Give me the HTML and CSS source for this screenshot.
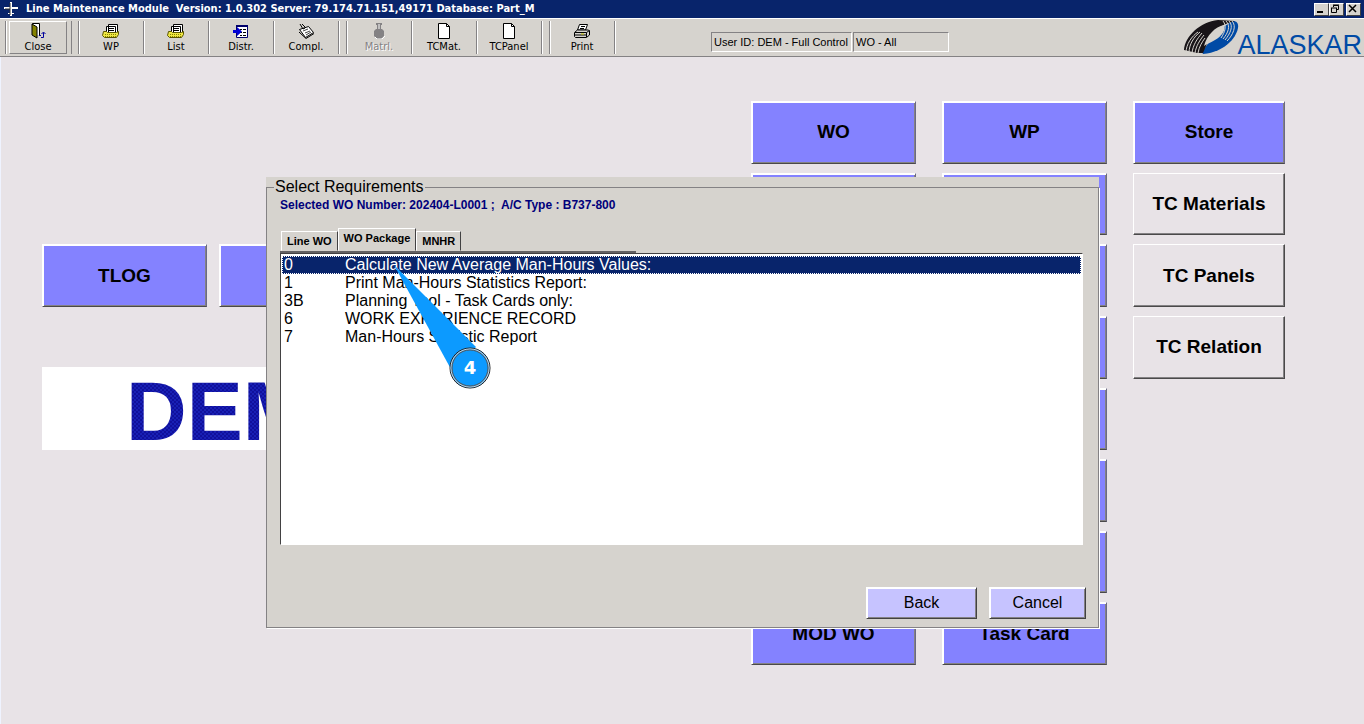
FILE: index.html
```html
<!DOCTYPE html>
<html lang="en">
<head>
  <meta charset="UTF-8">
  <meta name="viewport" content="width=device-width, initial-scale=1">
  <title>Line Maintenance Module</title>
  <link rel="stylesheet" href="styles.css">
</head>
<body>
  <header class="titlebar">
    <svg class="app-icon" width="16" height="16" viewBox="0 0 16 16"><path d="M7 1h2v5h6v2H9v4h2v1H9v2H7v-2H5v-1h2V8H1V6h6z" fill="#fff"/><path d="M7 2v12M2 8h5" stroke="#333" fill="none"/></svg>
    <h1 class="title">Line Maintenance Module&nbsp; Version: 1.0.302 Server: 79.174.71.151,49171 Database: Part_M</h1>
    <div class="win-buttons">
      <button class="win-btn" aria-label="Minimize"><svg width="11" height="10" viewBox="0 0 11 10"><path d="M2 7h6v2H2z"/></svg></button>
      <button class="win-btn" aria-label="Restore"><svg width="11" height="10" viewBox="0 0 11 10"><path d="M3.5 3V1.5h5v4H7M3 1h6M1 4h6M1.5 4v4.5h5V4" fill="none" stroke="#000"/></svg></button>
      <button class="win-btn win-close" aria-label="Close window"><svg width="11" height="10" viewBox="0 0 11 10"><path d="M2 1l7 7M9 1L2 8" stroke="#000" stroke-width="1.5"/></svg></button>
    </div>
  </header>

  <nav class="toolbar">
    <div class="tool-group">
      <button class="tool tool-raised">
        <svg width="18" height="16" viewBox="0 0 18 16"><path d="M3.5 12V.5h7V12" fill="#fff" stroke="#000"/><path d="M3 1l5 3v11l-5-3z" fill="#848200" stroke="#000"/><path d="M10 12.500h2M12 14.500h2.500v-5M12.500 11l2-2 2 2" fill="none" stroke="#00009c"/></svg>
        Close
      </button>
    </div>
    <div class="tool-group">
      <button class="tool">
        <svg width="18" height="16" viewBox="0 0 18 16"><path d="M6.500 9V1.500h9V10M4.500 9V3.500h9V10" fill="#fff" stroke="#000"/><path d="M7 5.500h5M7 7.500h5" stroke="#000"/><path d="M1.500 8.500h3l1 1h9l2-1v3l-2 3h-12l-2-2z" fill="#efe742" stroke="#5a5500"/><path d="M3 11.500h11M3 13.500h11" stroke="#848200" stroke-dasharray="1 1"/></svg>
        WP
      </button>
      <button class="tool">
        <svg width="18" height="16" viewBox="0 0 18 16"><path d="M6.500 9V1.500h9V10M4.500 9V3.500h9V10" fill="#fff" stroke="#000"/><path d="M7 5.500h5M7 7.500h5" stroke="#000"/><path d="M1.500 8.500h3l1 1h9l2-1v3l-2 3h-12l-2-2z" fill="#efe742" stroke="#5a5500"/><path d="M3 11.500h11M3 13.500h11" stroke="#848200" stroke-dasharray="1 1"/></svg>
        List
      </button>
      <button class="tool">
        <svg width="18" height="16" viewBox="0 0 18 16"><path d="M4.500 2.500h11v12h-11z" fill="#fff" stroke="#00006b"/><path d="M4 3h12" stroke="#00006b" stroke-width="2"/><path d="M8 6.500h2M11 6.500h3M8 9.500h2M11 9.500h3M8 12.500h2M11 12.500h3" stroke="#000"/><path d="M1 7h4V4l5 4.500L5 13v-3H1z" fill="#0000d6"/></svg>
        Distr.
      </button>
      <button class="tool">
        <svg width="18" height="16" viewBox="0 0 18 16"><path d="M2.500 6.500l9-3 5 6-8 5z" fill="#fff" stroke="#000"/><path d="M3 1l3 5 2-1M5 1l4 4M2 9l7 6.500 8-5" fill="none" stroke="#000"/><path d="M6 8l5-2M8 10l5-2M9 12l5-3" stroke="#444"/></svg>
        Compl.
      </button>
    </div>
    <div class="tool-group">
      <button class="tool" disabled>
        <svg width="18" height="16" viewBox="0 0 18 16"><path d="M6 0h6v2h-1v4h1l2 2v5l-3 3H7l-3-3V8l2-2h1V2H6z" fill="#848284"/><path d="M9 1v5M5 14l2 2h5l3-3" stroke="#fff" fill="none"/></svg>
        Matrl.
      </button>
      <button class="tool">
        <svg width="18" height="16" viewBox="0 0 18 16"><path d="M3.500.5h8l3 3v12h-11z" fill="#fff" stroke="#000"/><path d="M11.500.5v3h3" fill="none" stroke="#000"/></svg>
        TCMat.
      </button>
      <button class="tool">
        <svg width="18" height="16" viewBox="0 0 18 16"><path d="M3.500.5h8l3 3v12h-11z" fill="#fff" stroke="#000"/><path d="M11.500.5v3h3" fill="none" stroke="#000"/></svg>
        TCPanel
      </button>
    </div>
    <div class="tool-group">
      <button class="tool">
        <svg width="18" height="16" viewBox="0 0 18 16"><path d="M4.500 7l2-5.500h8l-2 5.500z" fill="#fff" stroke="#000"/><path d="M8 3.500h4M7 5.500h4" stroke="#000"/><path d="M1.500 9.500l3-2.500h11l1 1v4l-3 2.500h-11l-1-1z" fill="#d6d3ce" stroke="#000"/><path d="M2 9.500h11.500V14M13.500 9.500l3-2M2 12h11" fill="none" stroke="#000"/><path d="M8 11h3" stroke="#c6c300"/></svg>
        Print
      </button>
    </div>
    <div class="status">
      <span class="status-box status-user">User ID: DEM - Full Control</span>
      <span class="status-box status-wo">WO - All</span>
    </div>
    <div class="logo">
      <svg width="58" height="36" viewBox="0 0 58 36">
        <path d="M19 33C30 17 38 8 50 2c9 0 5 13-3 21-7 7-16 11-27 12z" fill="#004aa5"/>
        <path d="M1 31C2 17 17 3 35 1l17 1C41 5 32 9 26 20L20 34l-6 0z" fill="#181418"/>
        <g fill="none" stroke="#d6d3ce">
          <path d="M3 34C3 25 9 17 15 13M6 34c0-9 5-16 11-21M9 34c1-8 5-14 10-20M12 34c1-7 5-13 9-18M15 34c1-6 4-11 7-15"/>
          <path d="M40 2c4 5 2 11-2 17M43 2c5 5 2 12-3 18M46 2c5 5 1 13-4 19M49 2c5 5 1 14-5 20"/>
        </g>
        <path d="M21 27C24 16 32 8 41 6c2 5-2 11-9 15-5 3-9 4-11 6z" fill="#d6d3ce"/>
      </svg>
      <span class="logo-name">ALASKAR</span>
    </div>
  </nav>

  <main class="workspace">
    <section class="left-side">
      <div class="left-buttons">
        <button class="tile">TLOG</button>
        <button class="tile"></button>
      </div>
      <div class="banner"><span class="banner-text">DEM</span></div>
    </section>

    <section class="menu-grid">
      <button class="tile">WO</button>
      <button class="tile">WP</button>
      <button class="tile">Store</button>
      <button class="tile"></button>
      <button class="tile"></button>
      <button class="tile tile-plain">TC Materials</button>
      <button class="tile"></button>
      <button class="tile"></button>
      <button class="tile tile-plain">TC Panels</button>
      <button class="tile"></button>
      <button class="tile"></button>
      <button class="tile tile-plain">TC Relation</button>
      <button class="tile first-col"></button>
      <button class="tile"></button>
      <button class="tile first-col"></button>
      <button class="tile"></button>
      <button class="tile first-col"></button>
      <button class="tile"></button>
      <button class="tile first-col">MOD WO</button>
      <button class="tile">Task Card</button>
    </section>

    <div class="dialog" role="dialog" aria-label="Select Requirements">
      <fieldset class="dialog-frame">
        <legend>Select Requirements</legend>
        <p class="selected">Selected WO Number: 202404-L0001 ;&nbsp; A/C Type : B737-800</p>
        <div class="tabs" role="tablist">
          <button class="tab" role="tab">Line WO</button>
          <button class="tab tab-active" role="tab" aria-selected="true">WO Package</button>
          <button class="tab" role="tab">MNHR</button>
        </div>
        <div class="list">
          <table class="list-table">
            <tr class="selected-row"><td class="code">0</td><td>Calculate New Average Man-Hours Values:</td></tr>
            <tr><td class="code">1</td><td>Print Man-Hours Statistics Report:</td></tr>
            <tr><td class="code">3B</td><td>Planning Tool - Task Cards only:</td></tr>
            <tr><td class="code">6</td><td>WORK EXPERIENCE RECORD</td></tr>
            <tr><td class="code">7</td><td>Man-Hours Statistic Report</td></tr>
          </table>
        </div>
        <div class="actions">
          <button class="action action-back">Back</button>
          <button class="action">Cancel</button>
        </div>
      </fieldset>

      <!-- step marker -->
      <div class="callout">
        <svg width="100" height="128" viewBox="0 0 100 128">
          <path d="M2 2L84 84 60 108z" fill="#0c9aff"/>
          <circle cx="78" cy="105" r="20" fill="#0c9aff" stroke="#222"/>
          <circle cx="78" cy="105" r="19" fill="none" stroke="#ddd"/>
          <circle cx="78" cy="105" r="18" fill="none" stroke="#555"/>
        </svg>
        <span class="callout-num">4</span>
      </div>
    </div>
  </main>
</body>
</html>
```

FILE: styles.css
```css
* { box-sizing: border-box; }
body {
  margin: 0;
  min-height: 100vh;
  display: flex;
  flex-direction: column;
  background: #e8e3e7;
  color: #000;
  font-family: "Liberation Sans", Arial, sans-serif;
}
button { font-family: inherit; color: #000; padding: 0; border-radius: 0; }

/* title bar */
.titlebar {
  display: flex;
  align-items: center;
  height: 18px;
  padding: 0 3px;
  background: #08246b;
}
.title {
  flex: 1;
  margin: 0 0 0 7px;
  color: #fff;
  font: bold 11px/16px "DejaVu Sans Condensed", "DejaVu Sans", sans-serif;
  white-space: nowrap;
}
.win-buttons { display: flex; }
.win-btn {
  display: flex;
  width: 15px;
  height: 13px;
  background: #d6d3ce;
  border: 1px solid;
  border-color: #fff #424142 #424142 #fff;
}
.win-close { margin-left: 2px; }

/* toolbar */
.toolbar {
  display: flex;
  height: 39px;
  padding-left: 5px;
  background: #d6d3ce;
  border-top: 1px solid #fff;
  border-bottom: 1px solid #848284;
}
.tool-group {
  display: flex;
  margin: 2px 7px 2px 0;
  border-left: 1px solid #848284;
  box-shadow: inset 1px 0 #fff;
}
.tool {
  display: flex;
  flex-direction: column;
  align-items: center;
  width: 65px;
  padding-top: 2px;
  background: none;
  border: 0;
  border-right: 1px solid #848284;
  box-shadow: 1px 0 #fff;
  font: 11px/15px "DejaVu Sans Condensed", "DejaVu Sans", sans-serif;
}
.tool svg { flex-shrink: 0; }
.tool:disabled { color: #848284; text-shadow: 1px 1px #fff; }
.tool-raised {
  width: 58px;
  margin: 0 4px 0 3px;
  border: 1px solid;
  border-color: #fff #848284 #848284 #fff;
  padding-top: 1px;
  box-shadow: 4px 0 #d6d3ce, 5px 0 #848284;
}
.status {
  display: flex;
  gap: 1px;
  margin: 13px 0 0 89px;
}
.status-box {
  height: 20px;
  padding-left: 2px;
  border: 1px solid;
  border-color: #848284 #fff #fff #848284;
  font-size: 11px;
  line-height: 18px;
  white-space: nowrap;
}
.status-user { width: 141px; }
.status-wo { width: 96px; }
.logo {
  display: flex;
  margin-left: auto;
  padding-right: 2px;
}
.logo-name {
  margin-left: -4px;
  padding-top: 11px;
  color: #004aa5;
  font-size: 27px;
  line-height: 30px;
}

/* workspace */
.workspace {
  position: relative;
  flex: 1;
  display: flex;
  justify-content: space-between;
  align-items: flex-start;
  padding: 44px 79px 44px 41px;
  border-left: 1px solid #eff3ff;
}
.left-side { padding-top: 143px; }
.left-buttons {
  display: grid;
  grid-template-columns: 165px 165px;
  grid-auto-rows: 63px;
  gap: 12px;
}
.banner {
  margin-top: 60px;
  height: 83px;
  padding-left: 84px;
  background: #fff;
  font-size: 84px;
  font-weight: bold;
  line-height: 88px;
}
.banner-text {
  display: block;
  color: transparent;
  background: repeating-conic-gradient(#10109c 0 25%, #1820b5 0 50%) 0 0 / 4px 4px;
  -webkit-background-clip: text;
  background-clip: text;
}
.menu-grid {
  display: grid;
  grid-template-columns: 165px 165px 152px;
  grid-template-rows: repeat(8, 1fr);
  gap: 9px 26px;
  height: 564px;
}
.first-col { grid-column: 1; }
.tile {
  background: #8482ff;
  border: 1px solid;
  border-color: #fff #6b6984 #4a494a #fff;
  box-shadow: inset 1px 1px #fff, inset -1px -1px #848284;
  font-size: 19px;
  font-weight: bold;
}
.tile-plain {
  background: #e8e3e7;
  border-color: #fff #4a494a #4a494a #fff;
  box-shadow: inset -1px -1px #848284;
}

/* dialog */
.dialog {
  position: absolute;
  top: 120px;
  left: 265px;
  width: 833px;
  background: #d6d3ce;
}
.dialog-frame {
  margin: 0;
  padding: 0 15px 8px 13px;
  border: 1px solid #848284;
  box-shadow: 1px 1px #fff;
}
.dialog-frame legend {
  margin-left: -6px;
  padding: 0 1px;
  font-size: 16px;
  line-height: 20px;
}
.selected {
  margin: 0;
  color: #00007b;
  font-size: 12px;
  font-weight: bold;
  line-height: 16px;
}
.tabs {
  display: flex;
  align-items: flex-end;
  width: 356px;
  height: 40px;
  padding-left: 1px;
  border-bottom: 2px solid #636163;
}
.tab {
  height: 20px;
  padding: 0 5px;
  background: #d6d3ce;
  border: 1px solid;
  border-color: #fff #424142 transparent #fff;
  font-size: 11px;
  font-weight: bold;
}
.tab-active { height: 23px; padding-bottom: 3px; }
.list {
  height: 292px;
  background: #fff;
  border: 1px solid;
  border-color: #424142 #fff #fff #424142;
  padding: 2px 1px;
}
.list-table {
  width: 100%;
  border-collapse: collapse;
  font-size: 16px;
  line-height: 18px;
}
.list-table td { padding: 0; }
.list-table .code { width: 63px; padding-left: 2px; }
.selected-row {
  background: #08246b;
  color: #fff;
  outline: 1px dotted #fff;
  outline-offset: -1px;
}
.actions {
  display: flex;
  justify-content: flex-end;
  gap: 12px;
  margin: 42px -3px 0 0;
}
.action {
  width: 97px;
  height: 32px;
  background: #c6c3ff;
  border: 1px solid;
  border-color: #fff #424142 #424142 #fff;
  box-shadow: inset 1px 1px #fff, inset -1px -1px #848284;
  font-size: 16px;
}
.action-back { width: 111px; }

/* numbered pointer over the list */
.callout {
  position: absolute;
  top: 86px;
  left: 126px;
}
.callout svg { display: block; }
.callout-num {
  position: absolute;
  top: 94px;
  left: 58px;
  width: 40px;
  color: #fff;
  font: bold 18px/22px "DejaVu Sans", sans-serif;
  text-align: center;
}
```
